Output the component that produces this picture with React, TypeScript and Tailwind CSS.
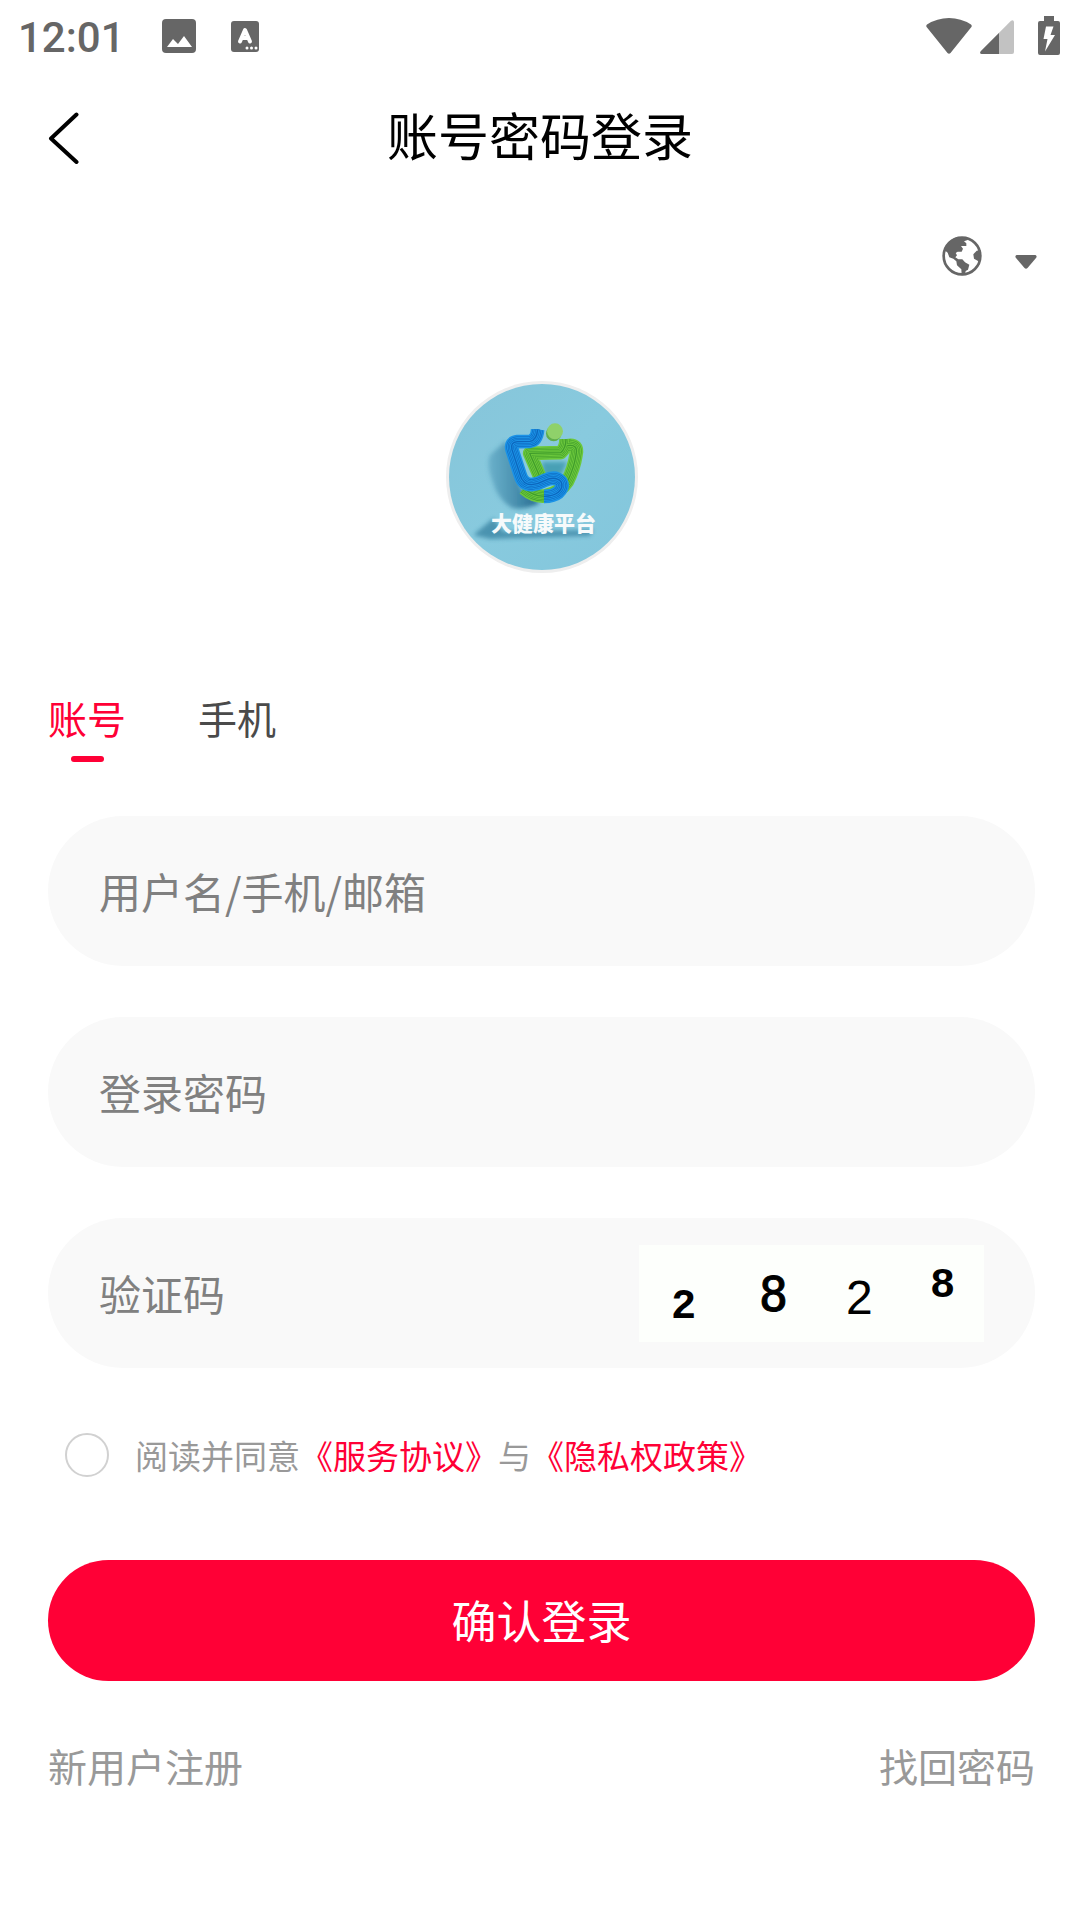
import { useState } from 'react';

const TABS = ['账号', '手机'];

// outer body first, then each groove (dark) with the strand inside it (light)
const RIBBON_WIDTHS = [41, 31, 28, 22, 19, 13, 10, 4];

function Ribbon({ d, light, dark }: { d: string; light: string; dark: string }) {
  return (
    <g fill="none" strokeLinejoin="round">
      {RIBBON_WIDTHS.map((width, i) => (
        <path key={width} d={d} stroke={i % 2 === 0 ? light : dark} strokeWidth={width} />
      ))}
    </g>
  );
}

function Logo() {
  return (
    <svg viewBox="0 0 192 192" className="w-48 h-48" role="img" aria-label="大健康平台">
      <defs>
        <linearGradient id="sky" x1="0" y1="0" x2="1" y2="1">
          <stop offset="0" stopColor="#86c5da" />
          <stop offset="0.5" stopColor="#88cade" />
          <stop offset="1" stopColor="#83c6dc" />
        </linearGradient>
        <linearGradient id="shade" x1="0" y1="0" x2="1" y2="0">
          <stop offset="0" stopColor="#3f8cae" stopOpacity="0.4" />
          <stop offset="1" stopColor="#1d6288" stopOpacity="0.95" />
        </linearGradient>
        <filter id="soft" x="-30%" y="-30%" width="160%" height="160%">
          <feGaussianBlur stdDeviation="7" />
        </filter>
      </defs>
      <circle cx="96" cy="96" r="96" fill="#eeeeee" />
      <circle cx="96" cy="96" r="93" fill="url(#sky)" />
      <g transform="scale(0.3333) translate(-48 -48)">
        <path
          d="M228 228 L180 270 Q168 300 188 350 Q204 405 245 428 Q280 438 330 414 L275 375 Z"
          fill="url(#shade)"
          filter="url(#soft)"
        />
        <path d="M190 460 L130 510 L180 522 L480 512 L490 495 L220 500 Z" fill="#2b7798" opacity="0.65" filter="url(#soft)" />
        <path d="M335 290 L412 290 L395 330 L340 335 Z" fill="#2f8fa5" opacity="0.7" filter="url(#soft)" />
        <Ribbon
          d="M408 222 Q408 250 392 263 L299 265 L336 350 M412 242 Q446 236 438 270 Q432 310 412 350 Q392 382 345 393 Q312 396 282 370"
          light="#6cc83c"
          dark="#3f9c2b"
        />
        <Ribbon
          d="M323 194 Q320 226 300 229 L262 230 Q240 232 246 254 L270 328 Q278 359 305 359 Q325 357 345 346 Q376 332 393 350 Q402 366 385 382 Q370 394 342 394"
          light="#1b92e6"
          dark="#0c66bd"
        />
        <circle cx="371" cy="206" r="23" fill="#5fae4c" />
        <circle cx="375" cy="199" r="24" fill="#8fd16a" />
      </g>
      <text
        x="45"
        y="150"
        fontSize="21"
        fontWeight="900"
        fill="#f6fafb"
        className="font-['Noto_Sans_CJK_SC',sans-serif]"
      >
        大健康平台
      </text>
    </svg>
  );
}

function StatusBar() {
  return (
    <div className="h-18 pl-[18px] pr-5 flex items-center justify-between text-[#666666]">
      <div className="flex items-center">
        <span className="w-36 pt-1 font-[Roboto,sans-serif] text-[42px] leading-none font-medium">12:01</span>
        <svg viewBox="0 0 34 34" className="w-[34px] h-[34px]">
          <rect width="34" height="34" rx="4" fill="currentColor" />
          <path d="M5 28 L11 20 L16 25 L22 17 L30 28 Z" fill="#fff" />
        </svg>
        <svg viewBox="0 0 28 31" className="ml-[35px] w-7 h-[31px]">
          <rect width="28" height="31" rx="3" fill="currentColor" />
          <path d="M9 20.500 L14 9 L19 20.500 M10.500 17 H17.500" fill="none" stroke="#fff" strokeWidth="4" strokeLinecap="round" strokeLinejoin="round" />
          <circle cx="16" cy="27" r="1.500" fill="#fff" />
          <circle cx="20.500" cy="27" r="1.500" fill="#fff" />
          <circle cx="25" cy="27" r="1.500" fill="#fff" />
        </svg>
      </div>
      <div className="flex items-center">
        <svg viewBox="0 0 46 36" className="w-[46px] h-9">
          <path d="M1 9.500 Q-.5 8 1 6.500 Q11 0 23 0 Q35 0 45 6.500 Q46.500 8 45 9.500 L24.500 35 Q23 36.500 21.500 35 Z" fill="currentColor" />
        </svg>
        <svg viewBox="0 0 34 34" className="ml-2 mt-0.5 w-[34px] h-[34px]">
          <path d="M1.500 34 Q-1 33.500 1 31 L31 .7 Q33.500 -.7 34 1.700 V32 Q34 34 32 34 Z" fill="#c2c2c2" />
          <path d="M1.500 34 Q-1 33.500 1 31 L19 13 V34 Z" fill="currentColor" />
        </svg>
        <svg viewBox="0 0 22 39" className="ml-6 mb-0.5 w-[22px] h-[39px]">
          <path d="M6 0 H16 V5 H20 Q22 5 22 7 V37 Q22 39 20 39 H2 Q0 39 0 37 V7 Q0 5 2 5 H6 Z" fill="currentColor" />
          <path d="M8 10.500 H15.500 L12.500 19 H17 L7 35.500 L9.500 23 H5.500 Z" fill="#fff" />
        </svg>
      </div>
    </div>
  );
}

function Captcha() {
  return (
    <button type="button" aria-label="刷新验证码" className="shrink-0 bg-[#fdfffc]">
      <svg viewBox="0 0 345 97" className="w-[345px] h-[97px]">
        <text x="32" y="73" fontSize="42" fontWeight="700" className="font-['Liberation_Mono',monospace]">2</text>
        <text x="120" y="66" fontSize="48" stroke="#000" className="font-['DejaVu_Sans_Mono',monospace]">8</text>
        <text x="207" y="69" fontSize="48" className="font-['Liberation_Sans',sans-serif]">2</text>
        <text x="291" y="52" fontSize="42" fontWeight="700" className="font-['Liberation_Mono',monospace]">8</text>
      </svg>
    </button>
  );
}

export default function App() {
  const [tab, setTab] = useState(TABS[0]);
  const [agreed, setAgreed] = useState(false);

  return (
    <div className="min-h-screen bg-white font-['Noto_Sans_CJK_SC',sans-serif]">
      <StatusBar />

      <header className="h-33 pl-12 pr-12 grid grid-cols-[1fr_auto_1fr] items-center">
        <button type="button" aria-label="返回" className="justify-self-start">
          <svg viewBox="0 0 31 52" className="w-[31px] h-[52px]">
            <path d="M28.500 2.500 L3 26.500 L28.500 50" fill="none" stroke="#000" strokeWidth="4" strokeLinecap="round" strokeLinejoin="round" />
          </svg>
        </button>
        <h1 className="pb-2 text-[51px] leading-[60px] text-black">账号密码登录</h1>
      </header>

      <main className="pl-12 pr-[45px]">
        <div className="flex justify-end h-[177px] pt-8">
          <button type="button" aria-label="选择语言" aria-haspopup="listbox" className="h-10 flex items-center gap-[33px] text-[#666666]">
            <svg viewBox="65 48 120 120" className="w-10 h-10">
              <circle cx="125" cy="108" r="55" fill="none" stroke="currentColor" strokeWidth="8" />
              <path
                d="M70 94 Q80 62 110 51 L140 52 L142 60 L131 64 L138 70 L138 78 L122 78 L128 86 L124 95 L112 95 L106 99 L110 106 L105 112 L114 118 L126 118 L134 127 L147 134 L143 149 L136 153 L134 165 L124 166 L123 148 L110 136 L108 124 L99 116 L87 112 L82 98 L75 92 Z"
                fill="currentColor"
              />
              <path d="M181 90 L169 92 L159 103 L161 116 L173 123 L180 124 Z" fill="currentColor" />
            </svg>
            <svg viewBox="0 0 22 14" className="mt-3 mr-[-2px] w-[22px] h-3.5">
              <path d="M1.500 0 H20.500 Q22.500 1 21 3 L12.500 13 Q11 14.500 9.500 13 L1 3 Q-.5 1 1.500 0 Z" fill="currentColor" />
            </svg>
          </button>
        </div>

        <div className="flex justify-center">
          <Logo />
        </div>

        <div role="tablist" className="mt-[117px] flex gap-[72px] text-[39px] leading-[54px]">
          {TABS.map((name) => (
            <button
              key={name}
              type="button"
              role="tab"
              aria-selected={tab === name}
              onClick={() => setTab(name)}
              className={`flex flex-col items-center gap-3 ${tab === name ? 'text-[#ff0036]' : 'text-[#4a4a4a]'}`}
            >
              {name}
              <span className={`w-[33px] h-1.5 rounded-full ${tab === name ? 'bg-[#ff0036]' : ''}`} />
            </button>
          ))}
        </div>

        <form className="mt-[54px]" onSubmit={(e) => e.preventDefault()}>
          <div className="flex flex-col gap-[51px] text-[42px]">
            <input
              type="text"
              aria-label="用户名/手机/邮箱"
              placeholder="用户名/手机/邮箱"
              className="h-[150px] w-full rounded-full bg-[#f9f9f9] px-[51px] pb-0.5 outline-none placeholder:text-[#808080]"
            />
            <input
              type="password"
              aria-label="登录密码"
              placeholder="登录密码"
              className="h-[150px] w-full rounded-full bg-[#f9f9f9] px-[51px] pb-0.5 outline-none placeholder:text-[#808080]"
            />
            <div className="h-[150px] flex items-center rounded-full bg-[#f9f9f9] px-[51px]">
              <input
                type="text"
                aria-label="验证码"
                placeholder="验证码"
                className="min-w-0 flex-1 pb-0.5 outline-none placeholder:text-[#808080]"
              />
              <Captcha />
            </div>
          </div>

          <div className="mt-[63px] pl-[17px] flex items-center text-[33px] leading-[48px] text-[#999999]">
            <input
              id="agree"
              type="checkbox"
              checked={agreed}
              onChange={(e) => setAgreed(e.target.checked)}
              className="appearance-none w-11 h-11 mr-[26px] rounded-full border-2 border-[#d1d1d1] checked:border-[#ff0036] checked:bg-[#ff0036]"
            />
            <label htmlFor="agree">阅读并同意</label>
            <a href="#service" className="text-[#ff0036]">《服务协议》</a>
            <span>与</span>
            <a href="#privacy" className="text-[#ff0036]">《隐私权政策》</a>
          </div>

          <button type="submit" className="mt-[81px] h-[121px] w-full rounded-full bg-[#ff0036] pb-0.5 text-[45px] text-white">
            确认登录
          </button>
        </form>

        <div className="mt-[57px] flex justify-between text-[39px] leading-[54px] text-[#999999]">
          <a href="#register">新用户注册</a>
          <a href="#recover">找回密码</a>
        </div>
      </main>
    </div>
  );
}
